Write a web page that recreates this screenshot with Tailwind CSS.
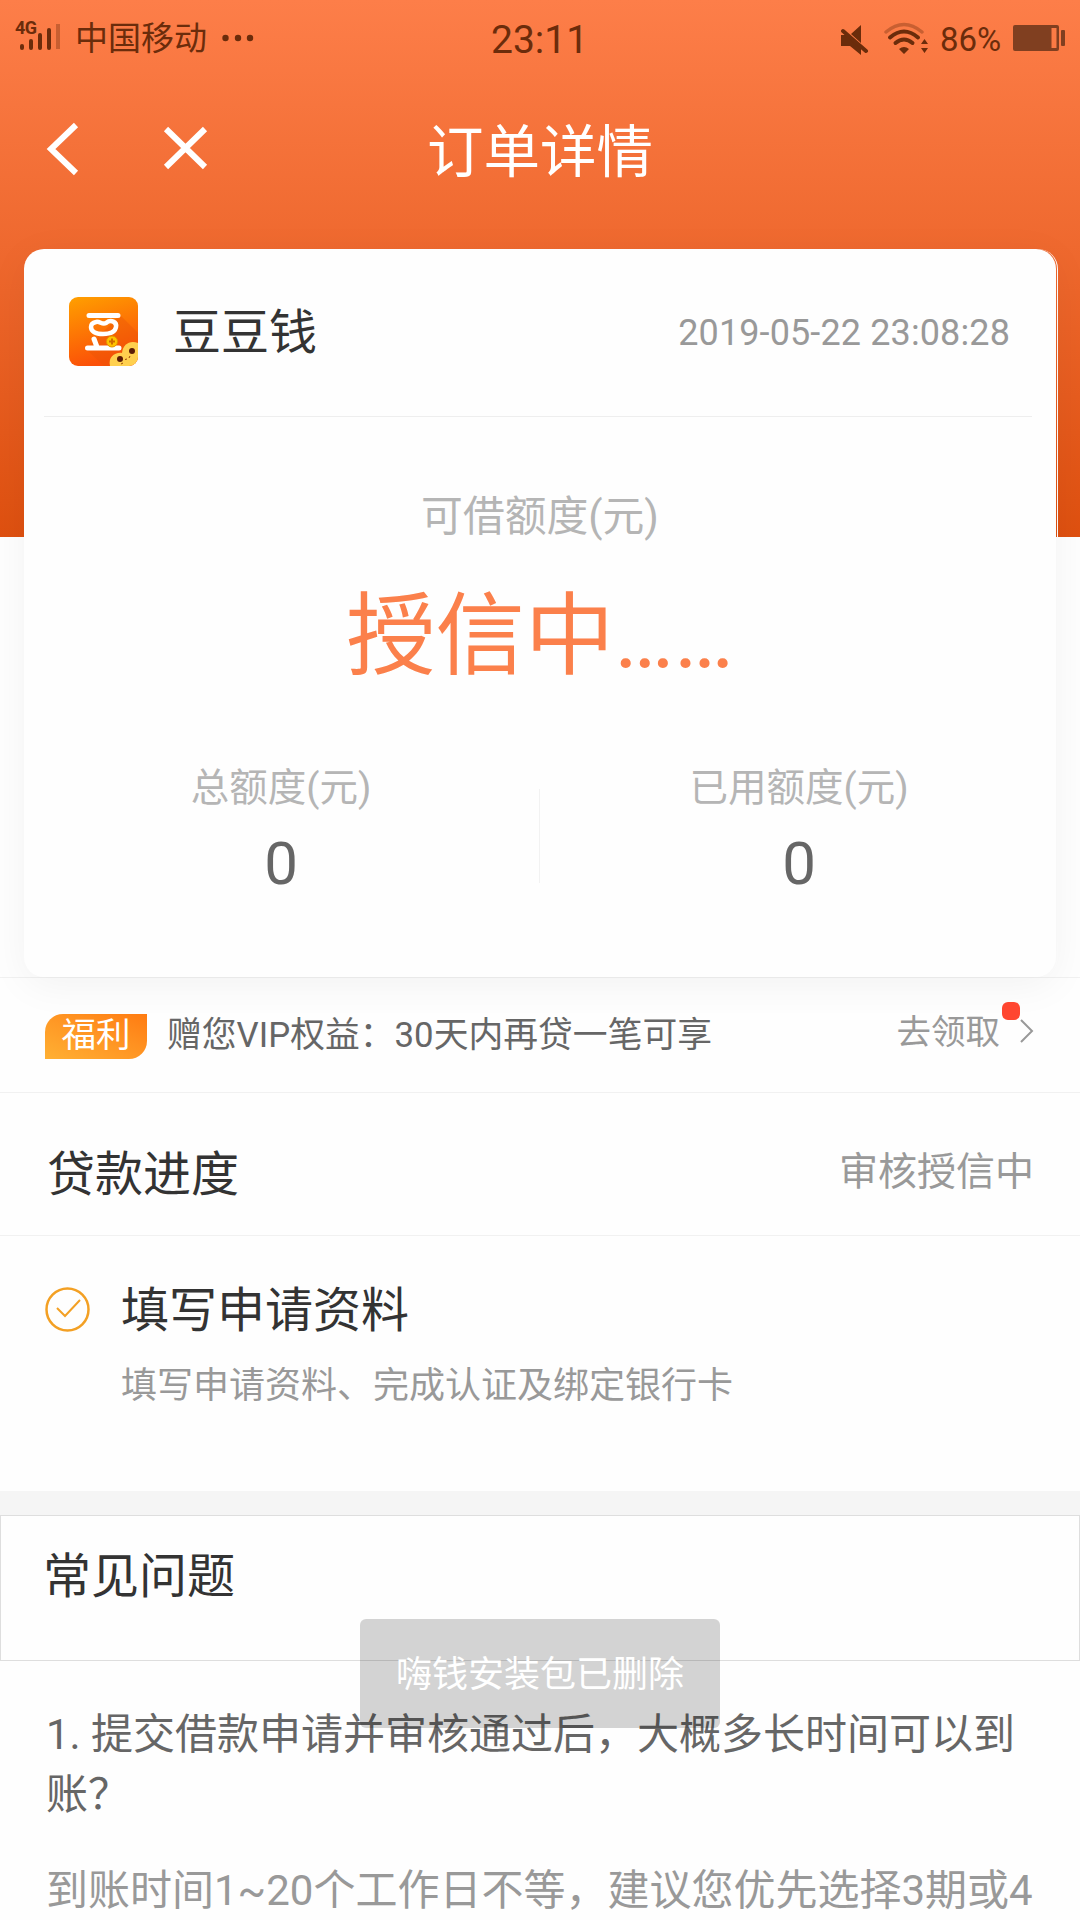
<!DOCTYPE html>
<html lang="zh-CN">
<head>
<meta charset="utf-8">
<title>订单详情</title>
<script src="https://cdn.jsdelivr.net/npm/@tailwindcss/browser@4"></script>
</head>
<body class="relative h-[1920px] w-[1080px] overflow-hidden bg-[#fefefe] font-['Roboto','Noto_Sans_CJK_SC',sans-serif] font-normal leading-none text-[#333]">
<header class="h-[537px] bg-linear-to-b/srgb from-[#fd7e49] to-[#de5010]">
  <div class="flex h-[76px] items-center text-[#6b2c0b]">
    <svg class="ml-[14px] h-[40px] w-[50px]" viewBox="14 18 50 40" fill="currentColor">
      <text x="15" y="34" font-size="18" font-weight="700" textLength="22">4G</text>
      <rect x="20" y="44" width="4" height="6" rx="2"/><rect x="29" y="39" width="4" height="11" rx="2"/><rect x="38" y="33" width="4" height="17" rx="2"/><rect x="47" y="28" width="4" height="22" rx="2"/><rect x="56" y="24" width="4" height="25" opacity=".35"/>
    </svg>
    <span class="ml-[11px] w-[147px] text-[33px]">中国移动</span>
    <svg class="h-[8px] w-[32px]" viewBox="0 0 32 8" fill="currentColor"><circle cx="3.500" cy="4" r="3.200"/><circle cx="16" cy="4" r="3.200"/><circle cx="28" cy="4" r="3.200"/></svg>
    <span class="ml-[237px] w-[350px] pt-[5px] text-[39px]">23:11</span>
    <svg class="h-[34px] w-[88px]" viewBox="841 20 88 34" fill="currentColor">
      <path d="M841 34h5l15 12V54l-11-9h-9zM851 33l10-9v18z"/><path d="M843 30l23 20" stroke="currentColor" stroke-width="4" stroke-linecap="round"/>
      <g fill="none" stroke="currentColor" stroke-width="4" stroke-linecap="round"><path d="M886 31q18-15 36 0" stroke-width="3.500" opacity=".35"/><path d="M890 36.500q14-12 28 0M895.500 42q8.500-7 17 0"/></g>
      <path d="M899 48q5-4 10 0l-5 5zM921 43l3.500-5 3.500 5zM921 47h7l-3.500 5z"/>
    </svg>
    <span class="ml-[11px] w-[73px] pt-[2px] text-[33px]">86%</span>
    <svg class="h-[26px] w-[52px]" viewBox="0 0 52 26" fill="#803f20"><path fill-rule="evenodd" d="M2 0H44q2 0 2 2V24q0 2-2 2H2q-2 0-2-2V2q0-2 2-2ZM38.500 3V23H43.500V3Z"/><rect x="48" y="5" width="4" height="16" rx="1"/></svg>
  </div>
  <div class="relative flex h-[150px] items-center justify-center text-white">
    <svg class="absolute left-[40px] top-[40px] h-[64px] w-[176px]" viewBox="40 116 176 64" fill="none" stroke="currentColor" stroke-width="6"><path d="M76 125L51 149L76 173M166 129L205 167M205 129L166 167"/></svg>
    <h1 class="pt-[4px] text-[56.500px]">订单详情</h1>
  </div>
</header>

<main>
  <section class="relative -mt-[288px] ml-[24px] h-[728px] w-[1034px] rounded-[20px] border-r border-white pr-px">
    <div class="h-full rounded-[20px] bg-[#fefefe] pl-[20px] pr-[24px] shadow-[0_8px_40px_rgba(0,0,0,0.05)]">
      <div class="flex h-[168px] items-center border-b border-[#eee] pl-[25px] pr-[22px]">
        <svg class="-mt-[2px] h-[69px] w-[69px]" viewBox="0 0 69 69">
          <defs><linearGradient id="g" x1="0" y1="0" x2=".3" y2="1"><stop stop-color="#ffa000"/><stop offset="1" stop-color="#fb5008"/></linearGradient><clipPath id="c"><rect width="69" height="69" rx="9"/></clipPath></defs>
          <g clip-path="url(#c)"><rect width="69" height="69" fill="url(#g)"/>
          <path d="M51 18L69 36V69H35L17 52Z" fill="#e85408" opacity=".4"/>
          <g fill="none" stroke="#fff" stroke-width="5" stroke-linecap="round" stroke-linejoin="round"><path d="M20 18.500H49M18.500 51H50M25 42L28 50"/><path d="M27 25C31 24 33 28 37 26C42 22 48 25 47 30C46 36 40 37 34 37C26 37 22 34 22 30Q22 26 27 25Z" stroke-width="4.500"/></g>
          <circle cx="43" cy="44.500" r="5.500" fill="#ffc400" stroke="#e39400"/><path d="M43 41.500V47.500M40 44.500H46" stroke="#d06c00" stroke-width="2"/>
          <path d="M41 69C39 60 46 55 53 56C54 47 61 43 69 46V69Z" fill="#ffd04e"/><circle cx="51" cy="62" r="3" fill="#5b1c05"/><circle cx="63" cy="54" r="3" fill="#5b1c05"/><path d="M56 62.500L58 62M60 61L61 59M52 67L54 66" fill="none" stroke="#9c4a08"/></g>
        </svg>
        <span class="ml-[35px] text-[48px]">豆豆钱</span>
        <span class="ml-auto text-[36px] tracking-[0.120px] text-[#999]">2019-05-22 23:08:28</span>
      </div>
      <div class="-mr-[4px]">
      <p class="mt-[79px] text-center text-[41.800px] text-[#b5b5b5]">可借额度(元)</p>
      <p class="mt-[54px] h-[90px] text-center text-[89.300px] text-[#fb804b]">授信中……</p>
      <div class="mt-[87px] flex items-start">
        <div class="flex w-[474px] flex-col items-center"><span class="text-[38.500px] text-[#b5b5b5]">总额度(元)</span><span class="mt-[27px] text-[60px] text-[#666]">0</span></div>
        <div class="ml-[21px] mt-[20px] h-[94px] w-px bg-[#f2f2f2]"></div>
        <div class="ml-[22px] flex w-[474px] flex-col items-center"><span class="text-[38.500px] text-[#b5b5b5]">已用额度(元)</span><span class="mt-[27px] text-[60px] text-[#666]">0</span></div>
      </div>
      </div>
    </div>
  </section>

  <section class="flex h-[116px] items-center border-y border-[#f1f1f1] pl-[45px] pr-[46px] text-[34.500px] text-[#666]">
    <span class="mt-[2px] flex h-[45px] w-[102px] items-center justify-center rounded-tl-[18px] rounded-br-[18px] bg-linear-to-tr from-[#ffb033] to-[#ff7b10] pb-[2px] text-white">福利</span>
    <span class="ml-[20px] text-[34.800px]">赠您VIP权益：30天内再贷一笔可享</span>
    <span class="relative ml-auto flex items-center pb-[6px] text-[#999]">去领取<i class="absolute right-[14px] -top-[13px] h-[18px] w-[18px] rounded-[6px] bg-[#ff4630]"></i>
      <svg class="ml-[20px] -mt-[2px] h-[24px] w-[14px]" viewBox="0 0 14 24" fill="none" stroke="currentColor" stroke-width="2"><path d="M1 1L12 12L1 23"/></svg></span>
  </section>
  <section class="flex h-[143px] items-center justify-between border-b border-[#f1f1f1] pl-[47px] pr-[46px]">
    <h2 class="pt-[22px] text-[48px]">贷款进度</h2><span class="pt-[16px] text-[39px] text-[#999]">审核授信中</span>
  </section>
  <section class="flex h-[255px] items-start pl-[45px] pt-[48px]">
    <svg class="mt-[3px] h-[46px] w-[46px]" viewBox="0 0 46 46" fill="none" stroke="#f3a024"><circle cx="22.500" cy="22.500" r="21" stroke-width="2.500"/><path d="M12 21L20 29L35 13" stroke-width="2"/></svg>
    <div class="ml-[30px] pt-[3px]"><h3 class="text-[48px]">填写申请资料</h3><p class="mt-[33px] text-[36px] text-[#999]">填写申请资料、完成认证及绑定银行卡</p></div>
  </section>
  <div class="h-[24px] bg-[#f5f5f5]"></div>
  <section class="h-[146px] border border-[#dedede] pl-[42px] pt-[37px]"><h2 class="text-[48px]">常见问题</h2></section>
  <section class="pl-[46px] text-[42px]">
    <p class="mt-[44px] w-[986px] leading-[60px] text-[#666]">1. 提交借款申请并审核通过后，大概多长时间可以到<br>账？</p>
    <p class="mt-[36px] whitespace-nowrap leading-[60px] text-[#999]">到账时间1~20个工作日不等，建议您优先选择3期或4</p>
  </section>
</main>
<div class="absolute left-[360px] top-[1619px] flex h-[109px] w-[360px] items-center justify-center rounded-[6px] bg-black/17 pt-[2px] text-[36px] text-white">嗨钱安装包已删除</div>
</body>
</html>
